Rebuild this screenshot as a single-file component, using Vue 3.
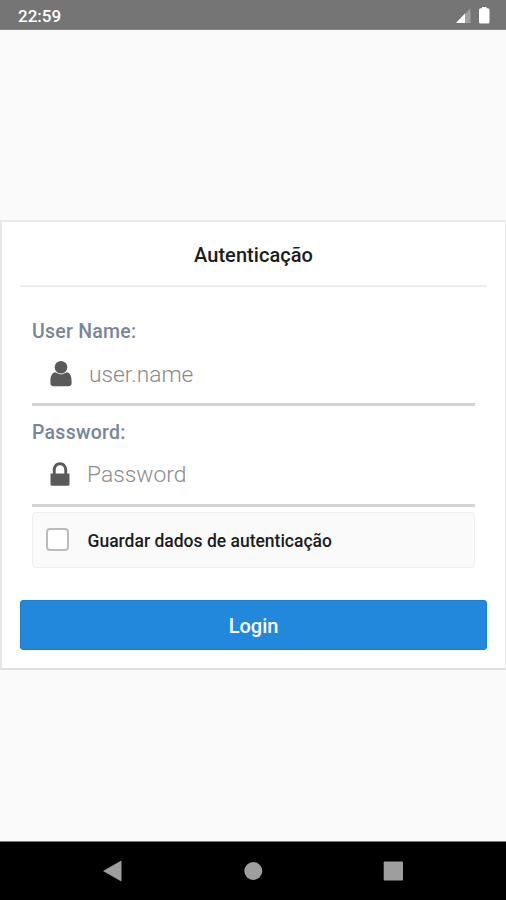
<script setup>
import { ref } from 'vue'
const username = ref('')
const password = ref('')
const remember = ref(false)
</script>

<template>
  <div class="screen">
    <header class="status">
      <span class="clock">22:59</span>
      <svg class="indicators" width="36" height="20" viewBox="0 0 36 20">
        <path d="M15.500 2.500V17H1Z" fill="#a0a0a0" />
        <path d="M10 7.500V17H1Z" fill="#fff" />
        <path d="M24 4Q24 2.300 25.700 2.300H27V1H31.500V2.300H32.800Q34.500 2.300 34.500 4V16Q34.500 17.500 33 17.500H25.500Q24 17.500 24 16Z" fill="#fff" />
      </svg>
    </header>

    <main class="content">
      <form class="card" @submit.prevent>
        <h1 class="title"><span>Autenticação</span></h1>
        <div class="fields">
          <label class="label user-label" for="username"><span>User Name:</span></label>
          <div class="field">
            <svg class="icon" width="24" height="28" viewBox="0 0 24 28">
              <path d="M6.400 12.300C3 12.700 1.400 16.100 1.400 21.300V23Q1.400 26.300 4.700 26.300H19.300Q22.600 26.300 22.600 23V21.300C22.600 16.100 21 12.700 17.600 12.300Q12 16.600 6.400 12.300Z" />
              <circle cx="12" cy="7.200" r="6.300" />
            </svg>
            <input id="username" v-model="username" class="input user-input" placeholder="user.name" />
          </div>
          <label class="label pass-label" for="password"><span>Password:</span></label>
          <div class="field">
            <svg class="icon" width="24" height="28" viewBox="0 0 24 28">
              <path fill-rule="evenodd" d="M1.500 12.500H3.800V9.200C3.800 4.600 6.800 1.300 11 1.300S18.200 4.600 18.200 9.200V12.500H20.500V23.200Q20.500 24.700 19 24.700H3Q1.500 24.700 1.500 23.200ZM6.700 12.500H15.300V9.200C15.300 6 13.500 4.200 11 4.200S6.700 6 6.700 9.200Z" />
            </svg>
            <input id="password" v-model="password" type="password" class="input pass-input" placeholder="Password" />
          </div>
          <label class="remember">
            <input v-model="remember" type="checkbox" class="check" />
            <span class="remember-text">Guardar dados de autenticação</span>
          </label>
        </div>
        <button class="login"><span>Login</span></button>
      </form>
    </main>

    <nav class="nav">
      <svg width="24" height="24" viewBox="0 0 24 24"><path d="M3 12L20.500 2Q21.500 1.500 21.500 2.600V21.400Q21.500 22.500 20.500 22Z" /></svg>
      <svg width="24" height="24" viewBox="0 0 24 24"><circle cx="12.300" cy="12" r="9" /></svg>
      <svg width="24" height="24" viewBox="0 0 24 24"><rect x="2.700" y="2.500" width="19.300" height="19" rx="1" /></svg>
    </nav>
  </div>
</template>

<style>
body {
  margin: 0;
}
</style>

<style scoped>
.screen {
  display: flex;
  flex-direction: column;
  box-sizing: border-box;
  width: 506px;
  height: 900px;
  background: #fafafa;
  font-family: Roboto, "Liberation Sans", sans-serif;
  overflow: hidden;
}
.status {
  display: flex;
  align-items: center;
  justify-content: space-between;
  box-sizing: border-box;
  height: 30px;
  padding: 2px 15px 0 18px;
  background: #757575;
  border-bottom: 1px solid #858585;
  color: #fff;
}
.clock {
  font-size: 17px;
  font-weight: 500;
  line-height: 20px;
}
.indicators {
  height: 20px;
  margin-top: 1px;
}
.content {
  flex: 1;
  padding-top: 190px;
}
.card {
  display: flex;
  flex-direction: column;
  box-sizing: border-box;
  height: 450px;
  padding: 0 18px;
  background: #fff;
  border: solid #e6e7e9;
  border-width: 2px 1px 2px 2px;
  border-top-color: #e9eaeb;
  border-bottom-color: #dddfe1;
}
.title {
  box-sizing: border-box;
  height: 65px;
  margin: 0;
  padding-top: 21px;
  border-bottom: 2px solid #ededee;
  color: #1b1c1f;
  font-size: 20px;
  line-height: 24px;
  font-weight: 500;
  letter-spacing: 0.05px;
  text-align: center;
}
.fields {
  display: flex;
  flex-direction: column;
  padding: 32px 12px 0;
}
.label {
  height: 26px;
  color: #778699;
  font-size: 19.5px;
  line-height: 26px;
  font-weight: 500;
  letter-spacing: 0.25px;
}
.field {
  display: flex;
  align-items: center;
  box-sizing: border-box;
  height: 61px;
  padding-left: 17px;
  border-bottom: 3px solid #d2d3d4;
}
.pass-label {
  margin-top: 14px;
}
.icon {
  flex: none;
  fill: #5a5a5a;
}
.input {
  flex: 1;
  min-width: 0;
  height: 40px;
  margin-left: 16px;
  padding: 0;
  border: 0;
  outline: 0;
  background: transparent;
  font-family: inherit;
  font-size: 22.8px;
  font-weight: 300;
}
.pass-input {
  height: 42px;
  margin-left: 14px;
  padding-bottom: 2px;
  box-sizing: border-box;
}
.input::placeholder {
  color: #8b8b8b;
  opacity: 1;
}
.remember {
  display: flex;
  align-items: center;
  box-sizing: border-box;
  height: 56px;
  margin-top: 5px;
  padding-left: 13px;
  border: 1px solid #eeeff0;
  border-radius: 4px;
  background: #fafafa;
}
.check {
  appearance: none;
  box-sizing: border-box;
  width: 23px;
  height: 23px;
  margin: 0 18.5px 2px 0;
  border: 2px solid #bcbcbc;
  border-radius: 4px;
  background: #fff;
}
.remember-text {
  padding-top: 2px;
  color: #1b1c1f;
  font-size: 17.5px;
  line-height: 24px;
  font-weight: 500;
}
.login {
  height: 50px;
  margin-top: 32px;
  padding: 2px 0 0;
  border: 1px solid #1680d5;
  border-radius: 3px;
  background: #2188dc;
  color: #fff;
  font-family: inherit;
  font-size: 20px;
  font-weight: 500;
}
.nav {
  display: flex;
  align-items: center;
  justify-content: space-between;
  box-sizing: border-box;
  height: 59px;
  padding: 0 101px 0 100px;
  border-top: 1px solid #777;
  background: #000;
}
.nav svg {
  fill: #9e9e9e;
}
</style>
